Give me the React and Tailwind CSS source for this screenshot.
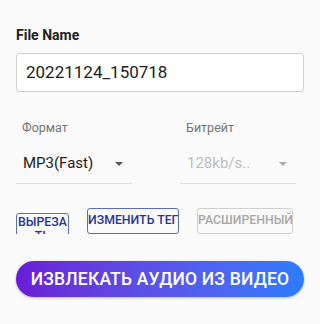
export default function App() {
  const font = { fontFamily: "Roboto, 'Noto Sans', sans-serif" };
  return (
    <div className="w-[320px] h-[324px] bg-[#fafafa] overflow-hidden" style={font}>
      <div className="pt-[26px] px-4">
        <div className="text-[14px] font-bold text-[#212121] leading-[18px]">File Name</div>
        <div className="mt-[9px] h-[39px] bg-white border border-[#d0d0d0] rounded-[3px] flex items-center pl-[9px] text-[17px] text-[#212121]">
          20221124_150718
        </div>
      </div>
      <div className="mt-[28px] flex px-4 gap-[48px]">
        <div className="w-[116px]">
          <div className="pl-[6px] text-[12.5px] text-[#757575] leading-[16px]">Формат</div>
          <div className="mt-[18px] h-[30px] border-b border-[#e0e0e0] flex items-start justify-between pr-[9px]">
            <span className="pl-[7px] text-[15px] text-[#212121] leading-[18px]">MP3(Fast)</span>
            <svg width="8" height="4" className="mt-[8px]"><polygon points="0,0 8,0 4,4" fill="#555" /></svg>
          </div>
        </div>
        <div className="w-[116px]">
          <div className="pl-[6px] text-[12.5px] text-[#757575] leading-[16px]">Битрейт</div>
          <div className="mt-[18px] h-[30px] border-b border-[#e0e0e0] flex items-start justify-between pr-[9px]">
            <span className="pl-[7px] text-[15px] text-[#bdbdbd] leading-[18px]">128kb/s..</span>
            <svg width="8" height="4" className="mt-[8px]"><polygon points="0,0 8,0 4,4" fill="#aaa" /></svg>
          </div>
        </div>
      </div>
      <div className="mt-[24px] h-[26px] overflow-hidden flex px-4 gap-[18px] items-start">
        <div className="mt-[5px] w-[53px] h-[40px] border border-[#5c6bc0] rounded-[3px] text-[12.3px] font-medium text-[#283593] text-center leading-[14px] pt-[1px] overflow-hidden whitespace-nowrap">
          ВЫРЕЗА<br />ТЬ
        </div>
        <div className="w-[92px] h-[26px] border border-[#5c6bc0] rounded-[3px] text-[12.3px] font-medium text-[#283593] leading-[15px] pt-[4px] overflow-hidden whitespace-nowrap">
          ИЗМЕНИТЬ ТЕГ
        </div>
        <div className="w-[96px] h-[26px] border border-[#cfcfcf] rounded-[3px] text-[12.3px] font-medium text-[#a8a8a8] leading-[15px] pt-[4px] overflow-hidden whitespace-nowrap">
          РАСШИРЕННЫЙ
        </div>
      </div>
      <div className="px-4 mt-[27px]">
        <div className="h-[36px] rounded-full bg-gradient-to-r from-[#6a1bd6] to-[#2a7cff] shadow-[0_1px_3px_rgba(0,0,0,0.25)] flex items-center justify-center text-white text-[17.5px] font-medium tracking-[0.2px]">
          ИЗВЛЕКАТЬ АУДИО ИЗ ВИДЕО
        </div>
      </div>
    </div>
  );
}
